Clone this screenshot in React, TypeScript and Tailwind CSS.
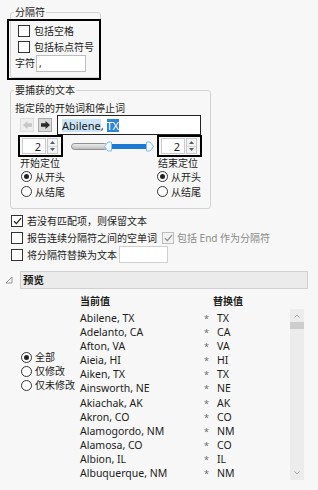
import React from "react";

function Check({ checked = false, disabled = false }: { checked?: boolean; disabled?: boolean }) {
  return (
    <span
      className={`flex h-[12px] w-[12px] shrink-0 items-center justify-center border ${
        disabled ? "border-[#bdbdbd] bg-[#f2f2f2]" : "border-[#333333] bg-white"
      }`}
    >
      {checked && (
        <svg width="9" height="8" viewBox="0 0 9 8">
          <path d="M1 4.2 L3.4 6.6 L8 1.2" fill="none" stroke={disabled ? "#8c8c8c" : "#222222"} strokeWidth="1.3" />
        </svg>
      )}
    </span>
  );
}

function Radio({ checked = false }: { checked?: boolean }) {
  return (
    <span className="flex h-[11px] w-[11px] shrink-0 items-center justify-center rounded-full border border-[#333333] bg-white">
      {checked && <span className="h-[5px] w-[5px] rounded-full bg-[#222222]" />}
    </span>
  );
}

function ArrowBtn({ dir, disabled = false }: { dir: "left" | "right"; disabled?: boolean }) {
  const color = disabled ? "#c6c6c6" : "#2b2b2b";
  return (
    <div
      className={`flex h-[14px] w-[14px] shrink-0 items-center justify-center border ${
        disabled ? "border-[#dcdcdc] bg-[#eeeeee]" : "border-[#a9a9a9] bg-[#d9d9d9]"
      }`}
    >
      <svg width="9" height="8" viewBox="0 0 9 8">
        {dir === "left" ? (
          <path d="M0 4 L4.5 0 L4.5 2.2 L9 2.2 L9 5.8 L4.5 5.8 L4.5 8 Z" fill={color} />
        ) : (
          <path d="M9 4 L4.5 0 L4.5 2.2 L0 2.2 L0 5.8 L4.5 5.8 L4.5 8 Z" fill={color} />
        )}
      </svg>
    </div>
  );
}

function Spin() {
  return (
    <div className="flex h-[22px] w-[45px] shrink-0 items-center border-2 border-black pl-[2px]">
      <div className="flex h-[16px] w-[24px] items-center justify-end border border-[#cbcbcb] bg-white pr-[4px] text-[11px] leading-none">
        2
      </div>
      <div className="ml-[1px] flex h-[16px] w-[11px] flex-col border border-[#c9c9c9] bg-[#f3f3f3]">
        <div className="flex flex-1 items-center justify-center border-b border-[#d6d6d6]">
          <svg width="5" height="3" viewBox="0 0 5 3">
            <path d="M0 3 L2.5 0 L5 3 Z" fill="#4d5d73" />
          </svg>
        </div>
        <div className="flex flex-1 items-center justify-center">
          <svg width="5" height="3" viewBox="0 0 5 3">
            <path d="M0 0 L2.5 3 L5 0 Z" fill="#4d5d73" />
          </svg>
        </div>
      </div>
    </div>
  );
}

function Slider() {
  return (
    <svg width="84" height="15" viewBox="0 0 84 15" className="ml-[8px] shrink-0">
      <defs>
        <linearGradient id="trk" x1="0" y1="0" x2="0" y2="1">
          <stop offset="0" stopColor="#f2f2f2" />
          <stop offset="1" stopColor="#b8b8b8" />
        </linearGradient>
      </defs>
      <rect x="0.5" y="4.5" width="36" height="6" rx="3" fill="url(#trk)" stroke="#8f8f8f" />
      <rect x="40" y="5" width="36" height="5" fill="#1d79d4" />
      <path d="M33.5 7.5 L37 3 L40.5 3 L40.5 12 L37 12 Z" fill="#f4f9ff" stroke="#86bdec" />
      <path d="M82.5 7.5 L79 3 L75.5 3 L75.5 12 L79 12 Z" fill="#f4f9ff" stroke="#86bdec" />
    </svg>
  );
}

const cities: [string, string][] = [
  ["Abilene, TX", "TX"],
  ["Adelanto, CA", "CA"],
  ["Afton, VA", "VA"],
  ["Aieia, HI", "HI"],
  ["Aiken, TX", "TX"],
  ["Ainsworth, NE", "NE"],
  ["Akiachak, AK", "AK"],
  ["Akron, CO", "CO"],
  ["Alamogordo, NM", "NM"],
  ["Alamosa, CO", "CO"],
  ["Albion, IL", "IL"],
  ["Albuquerque, NM", "NM"],
];

export default function App() {
  return (
    <div className="relative h-[490px] w-[318px] overflow-hidden bg-[#f7f7f7] font-['Noto_Sans','Noto_Sans_CJK_SC',sans-serif] text-[10px] leading-none text-[#1c1c1c]">
      {/* 分隔符 */}
      <fieldset className="ml-[10px] mt-[6px] w-[91px] rounded-[3px] border border-[#d3d3d3] pb-[6px] pt-[5px]">
        <legend className="ml-[3px] px-[1px] leading-[12px]">分隔符</legend>
        <div className="flex h-[16px] items-center pl-[7px]">
          <Check />
          <span className="ml-[4px]">包括空格</span>
        </div>
        <div className="flex h-[16px] items-center pl-[7px]">
          <Check />
          <span className="ml-[4px]">包括标点符号</span>
        </div>
        <div className="flex h-[16px] items-center pl-[4px]">
          <span>字符</span>
          <div className="ml-[1px] flex h-[17px] w-[50px] items-center border border-[#bdbdbd] bg-white pl-[2px] text-[10px]">
            ,
          </div>
        </div>
      </fieldset>

      {/* 要捕获的文本 */}
      <fieldset className="ml-[10px] mt-[6px] w-[201px] rounded-[3px] border border-[#d3d3d3] pb-[9px]">
        <legend className="ml-[3px] px-[1px] leading-[12px]">要捕获的文本</legend>
        <div className="ml-[4px] mt-[6px] h-[13px] leading-[13px]">指定段的开始词和停止词</div>
        <div className="flex h-[20px] items-center pl-[9px]">
          <ArrowBtn dir="left" disabled />
          <div className="ml-[4px]">
            <ArrowBtn dir="right" />
          </div>
          <div className="ml-[5px] flex h-[20px] w-[144px] items-center border border-[#222222] bg-white pl-[4px] text-[11px] leading-[13px]">
            <span className="bg-[#cce4f7]">Abilene</span>
            <span className="whitespace-pre">, </span>
            <span className="bg-[#2f86d6] text-white">TX</span>
          </div>
        </div>
        <div className="flex h-[22px] items-center pl-[7px]">
          <Spin />
          <Slider />
          <div className="ml-[2px]">
            <Spin />
          </div>
        </div>
        <div className="flex h-[12px] items-center pl-[9px]">
          <span className="w-[138px]">开始定位</span>
          <span>结束定位</span>
        </div>
        <div className="grid grid-cols-[136px_1fr] pl-[10px]">
          <div className="flex h-[15px] items-center">
            <Radio checked />
            <span className="ml-[3px]">从开头</span>
          </div>
          <div className="flex h-[15px] items-center">
            <Radio checked />
            <span className="ml-[3px]">从开头</span>
          </div>
          <div className="flex h-[15px] items-center">
            <Radio />
            <span className="ml-[3px]">从结尾</span>
          </div>
          <div className="flex h-[15px] items-center">
            <Radio />
            <span className="ml-[3px]">从结尾</span>
          </div>
        </div>
      </fieldset>

      {/* options */}
      <div className="ml-[11px] mt-[3px]">
        <div className="flex h-[17px] items-center">
          <Check checked />
          <span className="ml-[4px]">若没有匹配项，则保留文本</span>
        </div>
        <div className="flex h-[17px] items-center">
          <Check />
          <span className="ml-[4px]">报告连续分隔符之间的空单词</span>
          <span className="ml-[5px]">
            <Check checked disabled />
          </span>
          <span className="ml-[3px] text-[#8a8a8a]">包括 End 作为分隔符</span>
        </div>
        <div className="flex h-[17px] items-center">
          <Check />
          <span className="ml-[4px]">将分隔符替换为文本</span>
          <div className="ml-[2px] h-[17px] w-[49px] border border-[#d0d0d0] bg-white" />
        </div>
      </div>

      {/* 预览 */}
      <div className="mt-[8px] flex items-center">
        <svg width="8" height="8" viewBox="0 0 8 8" className="ml-[5px]">
          <path d="M1 7 L7 1 L7 7 Z" fill="none" stroke="#8a8a8a" strokeWidth="0.9" />
        </svg>
        <div className="ml-[7px] flex h-[18px] w-[288px] items-center border border-[#d0d0d0] bg-[#ebebeb] pl-[2px] text-[10.5px] font-bold">
          预览
        </div>
      </div>

      <div className="mt-[5px] flex h-[14px] items-center font-bold">
        <span className="w-[213px] pl-[80px]">当前值</span>
        <span>替换值</span>
      </div>

      <div className="mt-[1px] flex">
        <div className="w-[80px] pl-[21px] pt-[41px]">
          <div className="flex h-[14px] items-center">
            <Radio checked />
            <span className="ml-[3px]">全部</span>
          </div>
          <div className="flex h-[14px] items-center">
            <Radio />
            <span className="ml-[3px]">仅修改</span>
          </div>
          <div className="flex h-[14px] items-center">
            <Radio />
            <span className="ml-[3px]">仅未修改</span>
          </div>
        </div>
        <div className="w-[124px] pt-[2px] text-[10.5px]">
          {cities.map(([c]) => (
            <div key={c} className="h-[14.1px] whitespace-nowrap leading-[14.1px]">
              {c}
            </div>
          ))}
        </div>
        <div className="w-[13px] pt-[2px] text-[9px] text-[#6a6a6a]">
          {cities.map(([c]) => (
            <div key={c} className="h-[14.1px] translate-y-[1px] leading-[14.1px]">
              *
            </div>
          ))}
        </div>
        <div className="w-[73px] pt-[2px] text-[10.5px]">
          {cities.map(([c, s]) => (
            <div key={c} className="h-[14.1px] leading-[14.1px]">
              {s}
            </div>
          ))}
        </div>
        <div className="flex h-[171px] w-[14px] flex-col items-center bg-[#ececec]">
          <svg width="6" height="4" viewBox="0 0 6 4" className="mt-[5px]">
            <path d="M0.5 3.5 L3 1 L5.5 3.5" fill="none" stroke="#9a9a9a" strokeWidth="0.9" />
          </svg>
          <div className="mt-[4px] h-[7px] w-full bg-[#cdcdcd]" />
          <div className="flex-1" />
          <svg width="6" height="4" viewBox="0 0 6 4" className="mb-[5px]">
            <path d="M0.5 0.5 L3 3 L5.5 0.5" fill="none" stroke="#9a9a9a" strokeWidth="0.9" />
          </svg>
        </div>
      </div>

      {/* highlight annotation on 分隔符 options */}
      <div className="pointer-events-none absolute left-[7px] top-[19px] h-[61px] w-[94px] border-2 border-black" />
    </div>
  );
}
